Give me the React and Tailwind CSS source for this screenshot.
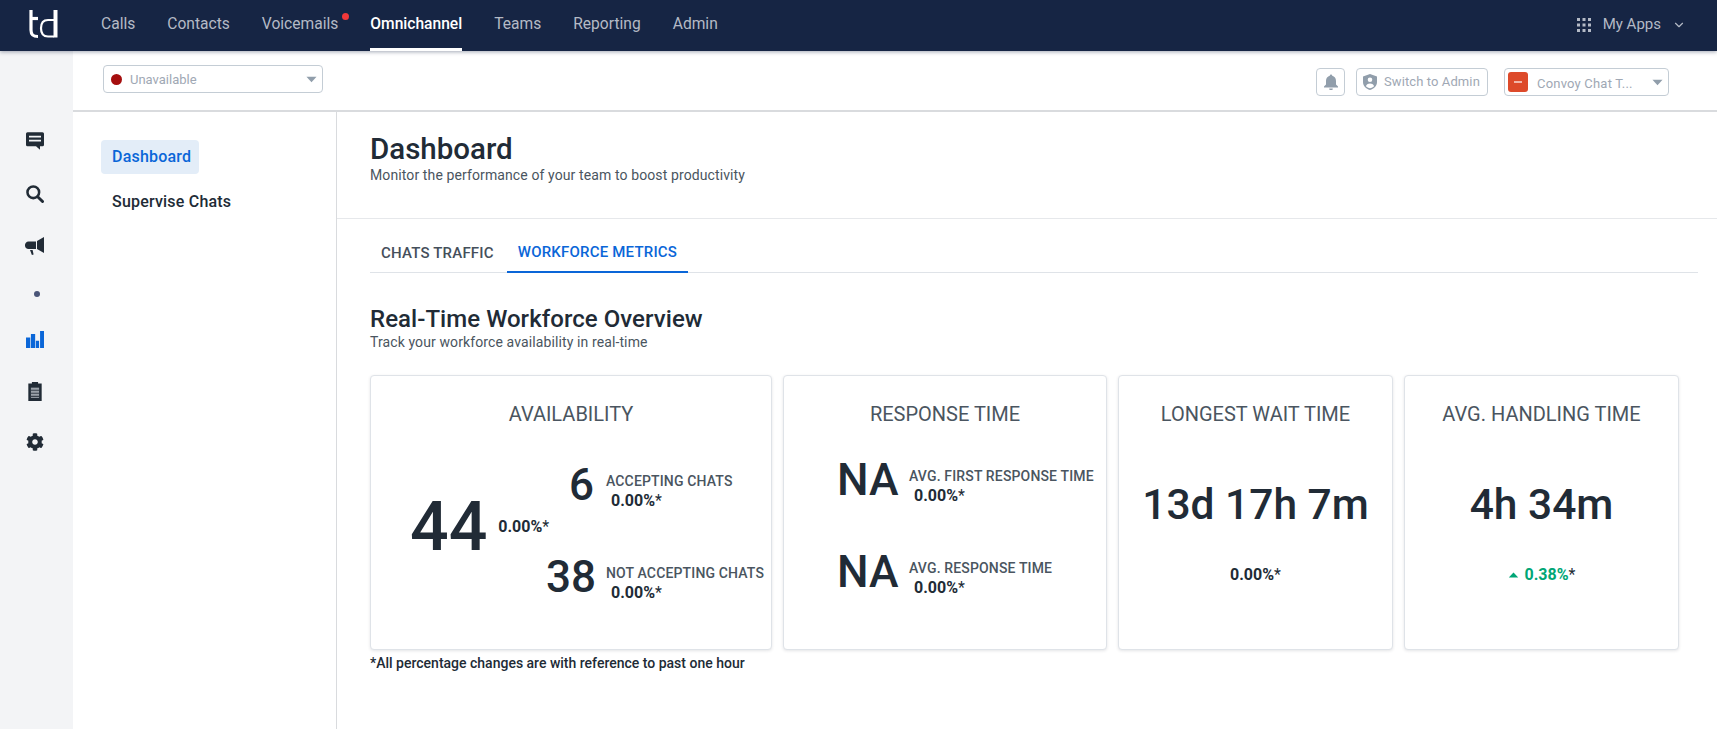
import { ChevronDown } from "lucide-react";
import { FaCog } from "react-icons/fa";

const navItems = ["Calls", "Contacts", "Voicemails", "Omnichannel", "Teams", "Reporting", "Admin"];

const Caret = ({ className }) => (
  <svg viewBox="0 0 12 7" className={className} fill="currentColor">
    <path d="M0.5 0.5h11L6 6.5z" />
  </svg>
);

const Pct = ({ className = "" }) => (
  <div className={`text-[16px] leading-[20px] font-bold text-[#212b36] ${className}`}>
    0.00%<span className="font-normal">*</span>
  </div>
);

const Metric = ({ value, label, numClass, gapClass, shiftClass }) => (
  <div className="flex items-center h-[60px]">
    <div className={`text-right font-medium text-[#212b36] ${shiftClass} ${numClass}`}>{value}</div>
    <div className={gapClass}>
      <div className="text-[14px] leading-[20px] font-medium tracking-[0.15px] text-[#4a5560] whitespace-nowrap">{label}</div>
      <Pct className="ml-[5px]" />
    </div>
  </div>
);

const CardTitle = ({ children }) => (
  <div className="pt-[26px] text-center text-[20px] leading-[25px] text-[#4a5560] whitespace-nowrap">{children}</div>
);

const Card = ({ className, children }) => (
  <div className={`h-[275px] shrink-0 rounded-[4px] border border-[#dfe3e8] bg-white shadow-[0_1px_3px_rgba(33,43,54,0.12)] ${className}`}>
    {children}
  </div>
);

const SimpleCard = ({ title, value, green }) => (
  <Card className="w-[275px]">
    <CardTitle>{title}</CardTitle>
    <div className="mt-[48px] text-center text-[42.5px] leading-[60px] font-medium text-[#212b36] whitespace-nowrap">{value}</div>
    {green ? (
      <div className="mt-[30px] flex items-center justify-center text-[16px] leading-[20px] font-bold text-[#00a676]">
        <Caret className="w-[11px] h-[6px] mr-[6px] rotate-180" />
        {green}
        <span className="font-normal text-[#212b36]">*</span>
      </div>
    ) : (
      <Pct className="mt-[30px] text-center" />
    )}
  </Card>
);

export default function App() {
  return (
    <div className="h-screen w-full overflow-hidden bg-white flex flex-col font-['Roboto',sans-serif] text-[#212b36]">
      {/* top bar */}
      <header className="relative z-10 h-[51px] shrink-0 bg-[#162544] shadow-[0_1px_4px_rgba(22,37,68,0.4)] flex items-stretch">
        <div className="w-[101px] shrink-0 pl-[28px] pt-[9px]">
          <svg viewBox="0 0 32 30" className="w-[32px] h-[30px]" fill="none" stroke="white" strokeWidth="3.2">
            <path d="M3 1v20c0 5 2 6.500 7 6.500" />
            <path d="M3 9.500h7" />
            <path d="M26 11h-6c-5 0-7 3-7 8.300s2 8.200 7 8.200h6" strokeWidth="2.200" />
            <path d="M27.500 1v27.500" strokeWidth="4" />
          </svg>
        </div>
        <nav className="flex items-stretch gap-[32px] text-[15.6px]">
          {navItems.map((item) => (
            <div
              key={item}
              className={`relative flex items-center border-b-[3px] pt-[1px] ${
                item === "Omnichannel" ? "border-white text-white font-medium" : "border-transparent text-[#b4bac6]"
              }`}
            >
              {item}
              {item === "Voicemails" && (
                <span className="absolute -right-[11px] top-[13px] w-[7px] h-[7px] rounded-full bg-[#f2383a]" />
              )}
            </div>
          ))}
        </nav>
        <div className="ml-auto flex items-center pr-[31px] pb-[2px] text-[15px] text-[#b4bac6]">
          <svg viewBox="0 0 14 14" className="w-[14px] h-[14px] mr-[12px]" fill="currentColor">
            <path d="M0 0h3v3H0zM5.500 0h3v3h-3zM11 0h3v3h-3zM0 5.500h3v3H0zM5.500 5.500h3v3h-3zM11 5.500h3v3h-3zM0 11h3v3H0zM5.500 11h3v3h-3zM11 11h3v3h-3z" />
          </svg>
          My Apps
          <ChevronDown className="w-[14px] h-[14px] ml-[11px]" strokeWidth={2} />
        </div>
      </header>

      <div className="flex flex-1 min-h-0">
        {/* icon rail */}
        <aside className="w-[73px] shrink-0 bg-[#f3f4f6] flex flex-col items-center pt-[64px] pr-[4px] text-[#212b36]">
          <div className="h-[52px] flex items-center">
            <svg viewBox="1 1.500 18 17.500" className="w-[18px] h-[18px]" fill="currentColor">
              <path d="M2.500 1.500h15A1.500 1.500 0 0 1 19 3v11a1.500 1.500 0 0 1-1.500 1.500H15V19l-4-3.500H2.500A1.500 1.500 0 0 1 1 14V3a1.500 1.500 0 0 1 1.500-1.500zM4 5v1.800h12V5zm0 4v1.800h12V9z" fillRule="evenodd" />
            </svg>
          </div>
          <div className="h-[54px] flex items-center">
            <svg viewBox="1 1 18.500 18.500" className="w-[18px] h-[18px]" fill="none" stroke="currentColor">
              <circle cx="8.500" cy="8.500" r="6" strokeWidth="2.600" />
              <path d="M13 13l5 5" strokeWidth="3" strokeLinecap="round" />
            </svg>
          </div>
          <div className="h-[50px] flex items-center">
            <svg viewBox="0 1 19 18" className="w-[19px] h-[18px]" fill="currentColor">
              <path d="M19 1v16l-7-4V5zM11 5.500v7.500H3.500A3.500 3.500 0 0 1 0 9.300 3.500 3.500 0 0 1 3.500 5.500zM5 14h2.600l1 4.500-1.700.5z" />
            </svg>
          </div>
          <div className="h-[45px] flex items-center">
            <span className="ml-[5px] w-[6px] h-[6px] rounded-full bg-[#4a5578]" />
          </div>
          <div className="h-[46px] flex items-center">
            <svg viewBox="0 0 55 52" className="w-[18px] h-[17px]" fill="#0a66d8">
              <path d="M0 20h13v32H0zM15 9h13v43H15zM30 30h10v22H30zM43 0h12v52H43z" />
            </svg>
          </div>
          <div className="h-[58px] flex items-center">
            <svg viewBox="3.500 1.500 13 18.500" className="w-[14px] h-[19px]">
              <path d="M7 1.500h6V3h3.500v17h-13V3H7z" fill="currentColor" />
              <path d="M6 7h8v10H6z" fill="#9aa1a9" />
              <path d="M6 9h8v1H6zM6 12h8v1H6zM6 15h8v1H6z" fill="#3a424c" />
            </svg>
          </div>
          <div className="h-[44px] flex items-center">
            <FaCog className="w-[18px] h-[18px]" />
          </div>
        </aside>

        <div className="flex-1 min-w-0 flex flex-col">
          {/* sub header */}
          <div className="h-[61px] shrink-0 border-b-2 border-[#d9dbde] flex items-start pl-[30px] pr-[48px]">
            <div className="mt-[14px] w-[220px] h-[28px] rounded-[4px] border border-[#c4cdd5] flex items-center pl-[7px] pr-[5px] pt-[1px] text-[13px] text-[#a0a8b4]">
              <span className="w-[11px] h-[11px] rounded-full bg-[#a50e0e] mr-[8px] -mt-[1px]" />
              Unavailable
              <Caret className="ml-auto w-[11px] h-[7px] text-[#919eab]" />
            </div>
            <div className="ml-auto mt-[17px] flex items-center">
              <div className="w-[29px] h-[28px] rounded-[4px] border border-[#c4cdd5] flex items-center justify-center text-[#919eab]">
                <svg viewBox="0 0 16 16" className="w-[16px] h-[16px]" fill="currentColor">
                  <path d="M8 0.500a1.200 1.200 0 0 1 1.200 1.300C11.500 2.400 13 4.300 13 7v3.500l2 2V13.500H1v-1l2-2V7c0-2.700 1.500-4.600 3.800-5.200A1.200 1.200 0 0 1 8 .5zM6.200 14.500h3.600a1.800 1.800 0 0 1-3.600 0z" />
                </svg>
              </div>
              <div className="ml-[11px] w-[132px] h-[28px] rounded-[4px] border border-[#c4cdd5] flex items-center pl-[6px] text-[13px] tracking-[0.1px] text-[#a0a8b4] whitespace-nowrap">
                <svg viewBox="0 0 14 16" className="w-[14px] h-[16px] mr-[7px] text-[#919eab]" fill="currentColor">
                  <path d="M7 0l7 2.500V8c0 3.800-3 6.800-7 8-4-1.200-7-4.200-7-8V2.500zM7 3.500A2.300 2.300 0 1 0 7 8.100 2.300 2.300 0 0 0 7 3.500zM3 12.200c1 1 2.500 1.700 4 2.100 1.500-.4 3-1.100 4-2.100 0-1.500-2-2.700-4-2.700s-4 1.200-4 2.700z" fillRule="evenodd" />
                </svg>
                Switch to Admin
              </div>
              <div className="ml-[16px] w-[165px] h-[28px] rounded-[4px] border border-[#c4cdd5] flex items-center pl-[3px] pr-[5px] text-[13px] tracking-[0.2px] text-[#a0a8b4] whitespace-nowrap">
                <span className="w-[20px] h-[20px] rounded-[3px] bg-[#dd4a2a] flex items-center justify-center mr-[9px]">
                  <span className="w-[8px] h-[1.5px] bg-white/60" />
                </span>
                <span className="pt-[3px]">Convoy Chat T...</span>
                <Caret className="ml-auto w-[11px] h-[7px] text-[#919eab]" />
              </div>
            </div>
          </div>

          <div className="flex flex-1 min-h-0">
            {/* side nav */}
            <aside className="w-[264px] shrink-0 border-r border-[#d9dbde] pt-[28px] pl-[28px] text-[16px] font-medium tracking-[0.2px]">
              <div className="w-[98px] h-[34px] rounded-[4px] bg-[#e3edf8] pl-[11px] flex items-center text-[#0a66d8]">Dashboard</div>
              <div className="mt-[11px] h-[34px] pl-[11px] flex items-center">Supervise Chats</div>
            </aside>

            {/* main */}
            <main className="flex-1 min-w-0">
              <div className="h-[107px] border-b border-[#e6e8eb] pl-[33px] pt-[20px]">
                <h1 className="text-[29.500px] leading-[34px] font-medium">Dashboard</h1>
                <p className="text-[14px] leading-[18px] tracking-[0.11px] text-[#4a5560]">Monitor the performance of your team to boost productivity</p>
              </div>
              <div className="pl-[33px] pr-[19px] pt-[20px]">
                <div className="h-[34px] flex border-b border-[#dfe3e8] text-[15px] tracking-[0.2px] font-medium">
                  <div className="px-[11px] pb-[5px] flex items-center text-[#454f5b]">CHATS TRAFFIC</div>
                  <div className="ml-[2px] h-[34px] px-[11px] pb-[5px] flex items-center text-[#0a66d8] border-b-2 border-[#0a66d8]">WORKFORCE METRICS</div>
                </div>
                <h2 className="mt-[33px] text-[24px] leading-[27px] tracking-[0.05px] font-medium">Real-Time Workforce Overview</h2>
                <p className="text-[14px] leading-[18px] tracking-[0.11px] text-[#4a5560]">Track your workforce availability in real-time</p>
                <div className="mt-[24px] flex gap-[11px]">
                  <Card className="w-[402px]">
                    <CardTitle>AVAILABILITY</CardTitle>
                    <div className="mt-[21px] flex">
                      <div className="flex items-center pl-[39px] w-[175px] h-[158px]">
                        <div className="text-[68px] leading-none font-medium mr-[11px]">44</div>
                        <Pct />
                      </div>
                      <div className="flex flex-col gap-[32px] pt-[13px]">
                        <Metric value="6" label="ACCEPTING CHATS" numClass="w-[48px] text-[44px]" gapClass="ml-[12px]" shiftClass="mb-[13px]" />
                        <Metric value="38" label="NOT ACCEPTING CHATS" numClass="w-[48px] text-[44px]" gapClass="ml-[12px]" shiftClass="mb-[13px]" />
                      </div>
                    </div>
                  </Card>
                  <Card className="w-[324px]">
                    <CardTitle>RESPONSE TIME</CardTitle>
                    <div className="mt-[29px] pl-[53px] flex flex-col gap-[32px]">
                      <Metric value="NA" label="AVG. FIRST RESPONSE TIME" numClass="w-[60px] text-[44.500px]" gapClass="ml-[12px]" shiftClass="mb-[11px]" />
                      <Metric value="NA" label="AVG. RESPONSE TIME" numClass="w-[60px] text-[44.500px]" gapClass="ml-[12px]" shiftClass="mb-[11px]" />
                    </div>
                  </Card>
                  <SimpleCard title="LONGEST WAIT TIME" value="13d 17h 7m" />
                  <SimpleCard title="AVG. HANDLING TIME" value="4h 34m" green="0.38%" />
                </div>
                <p className="mt-[4px] text-[14px] leading-[18px] font-medium">*All percentage changes are with reference to past one hour</p>
              </div>
            </main>
          </div>
        </div>
      </div>
    </div>
  );
}
